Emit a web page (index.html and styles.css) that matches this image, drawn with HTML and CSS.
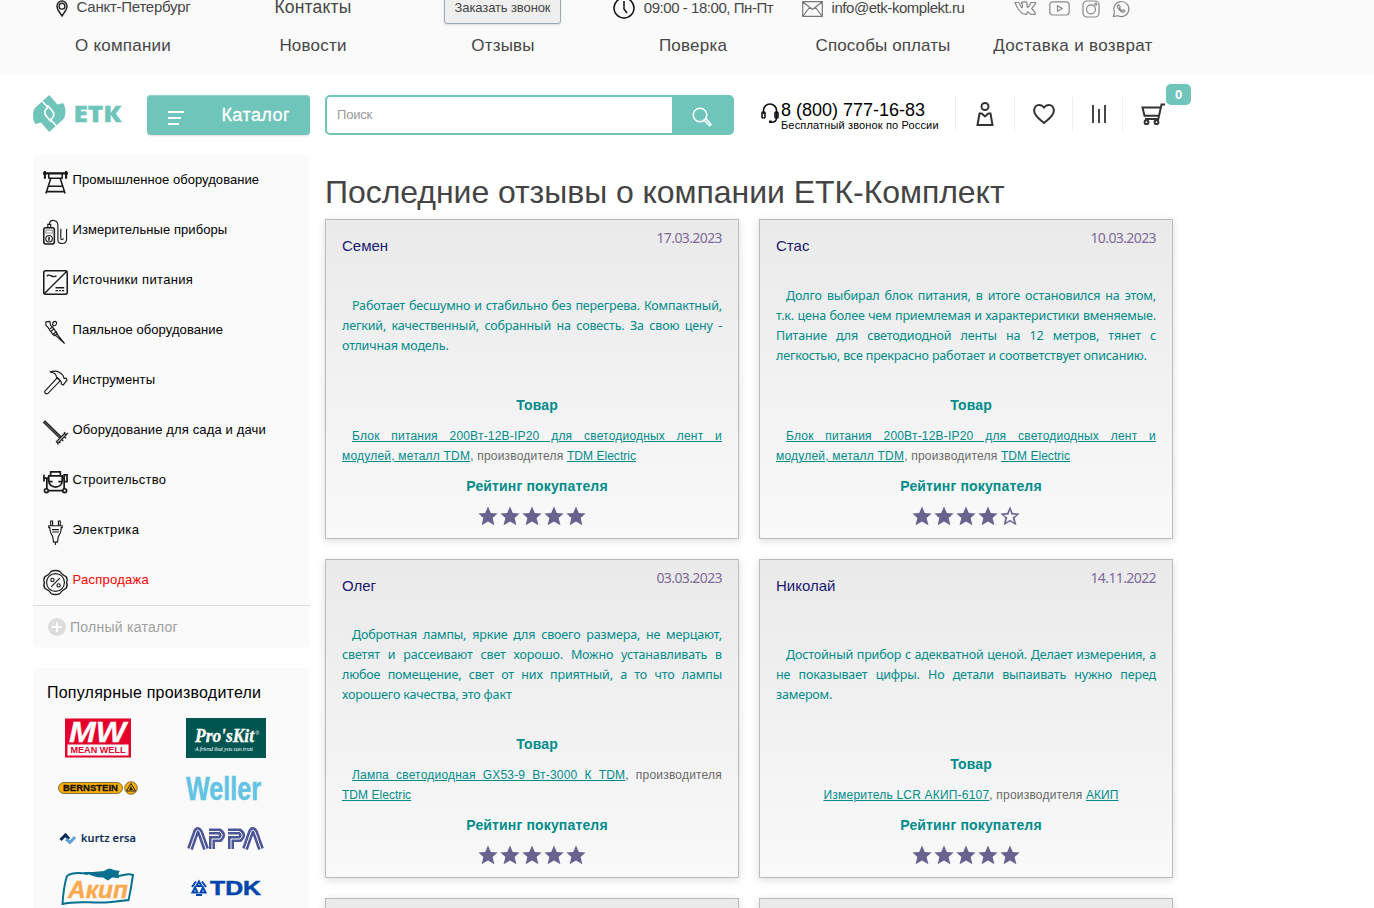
FILE: index.html
```html
<!DOCTYPE html>
<html lang="ru">
<head>
<meta charset="utf-8">
<title>Отзывы — ЕТК-Комплект</title>
<link rel="stylesheet" href="styles.css">
</head>
<body>
<div class="topbar">
  <div class="top-row contacts">
    <div class="cell city"><svg class="pin" viewBox="0 0 12 17"><path d="M6 16C4 12.500 1 10 1 6.200a5 5.200 0 0 1 10 0C11 10 8 12.500 6 16z"/><circle cx="6" cy="6.200" r="2.900"/></svg><span class="t-city">Санкт-Петербург</span></div>
    <div class="cell"><span class="t-cont">Контакты</span></div>
    <div class="cell"><button class="callback">Заказать звонок</button></div>
    <div class="cell hours"><svg class="clock" viewBox="0 0 22 22"><circle cx="11" cy="11" r="10"/><path d="M11 4v8l3 4"/></svg><span class="t-hours">09:00 - 18:00, Пн-Пт</span></div>
    <div class="cell mail"><svg class="env" viewBox="0 0 21 16"><path d="M.7.7h19.600v14.600H.7zM1 1l9.500 7.500L20 1M1 15l6.500-8.500M20 15l-6.500-8.500"/></svg><span class="t-mail">info@etk-komplekt.ru</span></div>
    <div class="cell social">
      <svg class="vk" viewBox="0 0 23 15"><path d="M1 1.500h3.500c1 0 1 2.500 3 5 .8.700 1.200-.5.700-3.500-.1-.8-1-.8-1-1 1-1.500 5.500-1.300 5.800-.3.300 1.500-.3 4 .3 4.600C15 6 16 3.500 17 1.500h4.500c.9.500-1.300 3-3.800 6 .8 1.500 3.300 3 3.800 5.300.1.800-3.300.7-4.500.5-1.500-.8-2.500-2.800-3.300-2.500-.7.500-.2 2-1.200 2.500C7 14 3.500 8 1 1.500z"/></svg>
      <svg class="yt" viewBox="0 0 21 15"><rect x=".8" y=".8" width="19.400" height="13.200" rx="3"/><path d="M8.500 4.800l4.700 2.700-4.700 2.700z"/></svg>
      <svg class="ig" viewBox="0 0 18 18"><rect x="1" y="1" width="16" height="16" rx="4"/><circle cx="9" cy="9.300" r="4.500"/><circle cx="13.800" cy="4.200" r="1"/></svg>
      <svg class="wa" viewBox="0 0 18 18"><path d="M1.500 16.500l1-4.500A7.500 7.500 0 1 1 6 15.700z"/><path d="M6 5c-1 1-.6 3 1.500 5s4.300 3 5.300 1.500c.4-.8-.3-1.200-1.500-1.700l-1 .9C9 10.300 8 9 7.500 8l.7-1C7.700 5.500 7 4.500 6 5z"/></svg>
    </div>
  </div>
  <nav class="top-row menu">
    <a class="cell"><span class="m1">О компании</span></a><a class="cell"><span class="m2">Новости</span></a><a class="cell"><span class="m3">Отзывы</span></a><a class="cell"><span class="m4">Поверка</span></a><a class="cell"><span class="m5">Способы оплаты</span></a><a class="cell"><span class="m6">Доставка и возврат</span></a>
  </nav>
</div>

<header class="header">
  <svg class="logo" viewBox="0 0 90 38"><path fill="#70c5ba" d="M16.200 0L24.500 9.500 30 8C32.500 11 33.500 18 31 23.500L16.200 37 8 27.500 2.500 29C0 26-1 19 1.500 13.500z"/><path stroke="#fff" stroke-width="1.700" d="M9.500 6.500L15 12.300c-3.500 2.500-4.500 6-1.500 9l4.500 5.500M23 30.500l-5.500-5.800c3.500-2.500 4.500-6 1.500-9l-4.500-5.500"/><text x="40.500" y="26.500" fill="#70c5ba" stroke="#70c5ba" stroke-width=".3" font-family="Open Sans" font-weight="800" font-size="22.500" textLength="48" lengthAdjust="spacingAndGlyphs">ЕТК</text></svg>
  <button class="catalog"><svg viewBox="0 0 18 14"><path d="M1 1h16M1 7h13M1 13h11"/></svg><span>Каталог</span></button>
  <div class="search"><span class="ph">Поиск</span><span class="go"><svg viewBox="0 0 20 20"><circle cx="8" cy="8" r="6.800"/><path d="M12 13l2-1.500 5 6-1.300 1.200z"/></svg></span></div>
  <div class="phone"><svg viewBox="0 0 18 21"><path d="M2.500 11V7.500a6.500 6.500 0 0 1 13 0V15c0 2.500-2 4.200-5 4.200"/><rect x="1" y="9" width="3" height="6" rx="1"/><rect x="14" y="9" width="3" height="6" rx="1"/><path d="M8 18.800h3" stroke-width="2.500"/></svg><div><div class="num">8 (800) 777-16-83</div><div class="free">Бесплатный звонок по России</div></div></div>
  <div class="acts">
    <div class="act a1"><svg width="18" height="24" viewBox="0 0 18 24"><circle cx="9" cy="4.500" r="3.500"/><path d="M3.500 11.500h2.200L9 14.500l3.300-3h2.200l2 11.500h-15z"/></svg></div>
    <div class="act a2"><svg width="22" height="20" viewBox="0 0 22 20"><path d="M11 3.500C8-.5 1.200 0 1.200 7c0 5 6 8.500 9.800 12 3.800-3.500 9.800-7 9.800-12 0-7-6.800-7.500-9.800-3.500z"/></svg></div>
    <div class="act a3"><svg width="14" height="18" viewBox="0 0 14 18"><path d="M1 0v18M7 4v14M13 0v18"/></svg></div>
    <div class="act a4"><svg width="24" height="22" viewBox="0 0 24 22"><path d="M24 1.500H20.500l-3.200 14.500H4"/><path d="M19.500 4.500H1.500l2 8.300h14"/><circle cx="5.500" cy="19.200" r="1.900"/><circle cx="15.500" cy="19.200" r="1.900"/></svg><span class="badge">0</span></div>
  </div>
</header>

<div class="page">
<aside class="side">
  <div class="box cats">
    <a><svg viewBox="0 0 26 26"><path stroke-width="2.400" d="M0 3.500h26"/><path stroke-width="1.600" d="M6 8.500h14M6 4v5M20 4v5M8 9L3 24.500M18 9l5 15.500M6 17h14M3 22.500h20"/><path stroke-width="2.200" d="M2 1v8M24 1v8"/></svg><span class="c1">Промышленное оборудование</span></a>
    <a><svg viewBox="0 0 26 26"><rect x=".8" y="8" width="11" height="17" rx="2" stroke-width="1.600"/><path stroke="#999" d="M3 10.500h7v3H3z"/><path d="M5 8V4.500h3V8M6.500 4c1-5 9-5 9 2v15c0 4.500 9 5 9-1V9M18.500 9v10c0 2 2.500 2 2.500 0"/><circle cx="6.300" cy="19.500" r="3.400"/><path d="M6.300 17.500v4" stroke-width="1.600"/></svg><span class="c2">Измерительные приборы</span></a>
    <a><svg viewBox="0 0 26 26"><rect x=".8" y=".8" width="24.400" height="24.400" rx="2" stroke-width="1.600"/><path d="M1 25L25 1M4 6.500c3-4 6 3 10-.5M13 18.500h9M13 21.500h2.500M16.500 21.500h2M19.500 21.500H22" stroke-width="1.400"/></svg><span class="c3">Источники питания</span></a>
    <a><svg viewBox="0 0 26 26"><path d="M3 2l4-.5 1 4 5 6 2 3-3 2-3-3-4-6-2-2zM12 15l10.500 9.500M14 14l8.500 10.500"/><path d="M10 5c0-5 5-4 4-1s-4 2-4 1zM7 9l4-2M8 12l4-3M10 15l4-3"/></svg><span class="c4">Паяльное оборудование</span></a>
    <a><svg viewBox="0 0 26 26"><path d="M2 22L15 8l3 3L5 24.500c-2 1-4-1-3-2.500zM7 2c6-2 11 0 14 4l1 3 2-.5 1 2-4 5-2-1v-2l-2-2-3-3c0-3-3-5-7-5.500z"/></svg><span class="c5">Инструменты</span></a>
    <a><svg viewBox="0 0 26 26"><path stroke-width="3.400" d="M1 1.500L18 18"/><path stroke="#aaa" stroke-width=".8" d="M1.500 2L18 18.500"/><path stroke-width="1.300" d="M14 22.500l8.500-8.500 1.500 1.500-8.500 8.500zM22 14l1-1.500M24 15l2-1.500M22 17.500l2 1.500M19.500 20l1.500 2M17 22.500l1 1.500M15.500 24v1.800"/></svg><span class="c6">Оборудование для сада и дачи</span></a>
    <a><svg viewBox="0 0 26 26"><g stroke-width="1.800"><path d="M8 5.500V2h10v3.500M6 6h14v5c0 9-14 9-14 0zM1 5v7M1 8.500h5M20 8.500h2M22 5h3v7h-3zM4 9v11M22 13v7M5 21.500h16M6 12h4M16 12h4"/><circle cx="3.500" cy="21.500" r="2"/><circle cx="22.500" cy="21.500" r="2"/></g></svg><span class="c7">Строительство</span></a>
    <a><svg viewBox="0 0 26 26"><path d="M8 6V1h2v5M16 6V1h2v5M6 6h14v2h-1c0 5-1 6-3 9l-1 6h-4l-1-6c-2-3-3-4-3-9H6zM9.500 10h7M9.500 12.500h7M13 23v3"/></svg><span class="c8">Электрика</span></a>
    <a class="sale"><svg viewBox="0 0 26 26"><path d="M8.500 1.500Q13-.5 17.500 1.500L20 4.500l4 2.500q2 3 .5 6 1.500 3-.5 6l-4 2.500-2.500 3Q13 26.500 8.500 24.500L6 21.500 2 19q-2-3-.5-6Q0 10 2 7l4-2.500z" stroke-width="1.400"/><circle cx="13" cy="13" r="9.300"/><circle cx="9.800" cy="10.300" r="1.700"/><circle cx="16.200" cy="16" r="1.700"/><path d="M17.500 8.500l-9 9"/></svg><span class="c9">Распродажа</span></a>
    <div class="full"><svg viewBox="0 0 18 18"><circle cx="9" cy="9" r="9"/><path d="M9 4v10M4 9h10"/></svg><span>Полный каталог</span></div>
  </div>
  <div class="box makers">
    <h3>Популярные производители</h3>
    <div class="brands">
      <svg viewBox="0 0 80 40"><path fill="#e4002b" d="M7 .5h66v39H7z"/><path fill="#fff" d="M9.500 26.500h61V37.500h-61z"/><text x="11" y="24" fill="#fff" stroke="#fff" stroke-width=".3" font-family="Liberation Sans" font-weight="700" font-style="italic" font-size="29.500" textLength="57" lengthAdjust="spacingAndGlyphs">MW</text><text x="12.500" y="35.300" fill="#e4002b" font-family="Liberation Sans" font-weight="700" font-size="9.500" textLength="55" lengthAdjust="spacingAndGlyphs">MEAN WELL</text></svg>
      <svg viewBox="0 0 80 40"><path fill="#005550" d="M0 0h80v40H0z"/><text x="9" y="24" fill="#fff" stroke="#fff" stroke-width=".3" font-family="Liberation Serif" font-weight="700" font-style="italic" font-size="18" textLength="59" lengthAdjust="spacingAndGlyphs">Pro'sKit</text><text x="69.500" y="17" fill="#fff" font-size="5" font-family="Liberation Sans">®</text><text x="9" y="32.500" fill="#fff" font-family="Liberation Serif" font-style="italic" font-size="6" textLength="58">A friend that you can trust</text></svg>
      <svg viewBox="0 0 80 40"><rect x=".5" y="14.500" width="64" height="11" rx="5.500" fill="#f9ae00" stroke="#4b4534" stroke-width=".7"/><text x="5" y="23.400" fill="#111" stroke="#111" stroke-width=".3" font-family="Liberation Sans" font-weight="700" font-size="9.500" textLength="55" lengthAdjust="spacingAndGlyphs">BERNSTEIN</text><circle cx="73" cy="20" r="6.300" fill="#f9ae00" stroke="#4b4534" stroke-width=".7"/><path d="M73 15.500l4.600 7.500h-9.200z" fill="none" stroke="#222"/><path d="M73 18l2 4h-4z" fill="#222"/></svg>
      <svg viewBox="0 0 80 40"><text x="0" y="32" fill="#62c3e3" stroke="#62c3e3" stroke-width=".5" font-family="Liberation Sans" font-weight="700" font-size="33" textLength="75" lengthAdjust="spacingAndGlyphs">Weller</text></svg>
      <svg viewBox="0 0 80 40"><path d="M2.500 22l5-5 3.500 4" fill="none" stroke="#0d2c54" stroke-width="3"/><path d="M8 21l4 3.500L17 19" fill="none" stroke="#64a0d8" stroke-width="3"/><text x="23" y="23.500" fill="#0d2c54" stroke="#0d2c54" stroke-width=".2" font-family="Open Sans" font-weight="600" font-size="11" textLength="55">kurtz ersa</text></svg>
      <svg viewBox="0 0 80 40"><g fill="none" stroke="#4c5696" stroke-width="6"><path d="M4 31l6-17q1.500-4 4 0l6 17M26 31V21H34q4.500-4-.5-7.500H23M45 31V21h9q4.500-4-.5-7.500H42M59 31l6-17q1.500-4 4 0l6 17"/></g><g fill="none" stroke="#fafafa" stroke-width="1"><path d="M4 31l6-17q1.500-4 4 0l6 17M26 31V21H34q4.500-4-.5-7.500H23M45 31V21h9q4.500-4-.5-7.500H42M59 31l6-17q1.500-4 4 0l6 17"/></g></svg>
      <svg viewBox="0 0 80 40"><path d="M30 6C20 4 13 5 9 8 6 17 5 28 4.500 36c15-4 31 0 49-2l17-2c2-8 3-16 4.500-25-5-2-8 0-14 1" fill="none" stroke="#08708f" stroke-width="2"/><path d="M25 4c8 0 13 0 21-1 5-3 6-2.500 10-1l6 1c-3 3 0 5-1 7l-7-.5-4 3-5-3c-7 0-13-2-20-5.500z" fill="#08708f"/><text x="10" y="29.500" fill="#faa94e" stroke="#faa94e" stroke-width=".4" font-family="Liberation Sans" font-weight="700" font-style="italic" font-size="24" textLength="60" lengthAdjust="spacingAndGlyphs">Акип</text></svg>
      <svg viewBox="0 0 80 40"><g fill="none" stroke="#0046ad" stroke-width="2"><path d="M13 13.500l2.500 4.500h-5zM9 19.500l-2.500 5h5zM17 19.500l-2.500 5h5zM10 13.500L6 19M16 13.500l4 5.500M10 27h6"/></g><text x="24" y="27" fill="#0046ad" stroke="#0046ad" stroke-width=".5" font-family="Liberation Sans" font-weight="700" font-size="20.500" textLength="51" lengthAdjust="spacingAndGlyphs">TDK</text></svg>
    </div>
  </div>
</aside>

<main class="main">
  <h1>Последние отзывы о компании ЕТК-Комплект</h1>
  <div class="grid">
    <article class="card">
      <div class="head"><span class="name">Семен</span><span class="date">17.03.2023</span></div>
      <div class="text"><p>Работает бесшумно и стабильно без перегрева. Компактный, легкий, качественный, собранный на совесть. За свою цену - отличная модель.</p></div>
      <h4>Товар</h4>
      <p class="prod"><a>Блок питания 200Вт-12В-IP20 для светодиодных лент и модулей, металл TDM</a>, производителя <a class="brand">TDM Electric</a></p>
      <h4>Рейтинг покупателя</h4>
      <div class="stars"><i></i><i></i><i></i><i></i><i></i></div>
    </article>
    <article class="card">
      <div class="head"><span class="name">Стас</span><span class="date">10.03.2023</span></div>
      <div class="text"><p>Долго выбирал блок питания, в итоге остановился на этом, т.к. цена более чем приемлемая и характеристики вменяемые. Питание для светодиодной ленты на 12 метров, тянет с легкостью, все прекрасно работает и соответствует описанию.</p></div>
      <h4>Товар</h4>
      <p class="prod"><a>Блок питания 200Вт-12В-IP20 для светодиодных лент и модулей, металл TDM</a>, производителя <a class="brand">TDM Electric</a></p>
      <h4>Рейтинг покупателя</h4>
      <div class="stars"><i></i><i></i><i></i><i></i><i class="off"></i></div>
    </article>
    <article class="card">
      <div class="head"><span class="name">Олег</span><span class="date">03.03.2023</span></div>
      <div class="text"><p>Добротная лампы, яркие для своего размера, не мерцают, светят и рассеивают свет хорошо. Можно устанавливать в любое помещение, свет от них приятный, а то что лампы хорошего качества, это факт</p></div>
      <h4>Товар</h4>
      <p class="prod"><a>Лампа светодиодная GX53-9 Вт-3000 К TDM</a>, производителя <a class="brand">TDM Electric</a></p>
      <h4>Рейтинг покупателя</h4>
      <div class="stars"><i></i><i></i><i></i><i></i><i></i></div>
    </article>
    <article class="card">
      <div class="head"><span class="name">Николай</span><span class="date">14.11.2022</span></div>
      <div class="text"><p>Достойный прибор с адекватной ценой. Делает измерения, а не показывает цифры. Но детали выпаивать нужно перед замером.</p></div>
      <h4>Товар</h4>
      <p class="prod short"><a>Измеритель LCR АКИП-6107</a>, производителя <a class="brand">АКИП</a></p>
      <h4>Рейтинг покупателя</h4>
      <div class="stars"><i></i><i></i><i></i><i></i><i></i></div>
    </article>
    <article class="card"></article>
    <article class="card"></article>
  </div>
</main>
</div>
</body>
</html>
```
FILE: styles.css
```css
* { box-sizing: border-box; }
html, body { height: 908px; overflow: hidden; }
body { margin: 0; background: #fff; color: #464646; font-family: "Liberation Sans", Arial, sans-serif; }
svg { display: block; flex: none; fill: none; overflow: visible; }
a { color: inherit; }
h1, h3, h4, p { margin: 0; }

.topbar { height: 75px; background: #fafafa; padding-left: 28px; overflow: hidden; }
.top-row { display: grid; grid-template-columns: repeat(6, 190px); }
.cell { display: flex; align-items: center; justify-content: center; white-space: nowrap; }
.contacts { height: 34px; margin-top: -10px; font-size: 17px; }
.menu { height: 42px; padding-top: 2px; font-size: 17px; letter-spacing: .2px; }
.m5 { letter-spacing: .1px; }
.m6 { letter-spacing: .35px; }
.t-cont { font-size: 17.500px; letter-spacing: .2px; padding-top: 1px; }
.t-city { font-size: 15px; letter-spacing: -.25px; }
.t-hours { font-size: 15px; letter-spacing: -.45px; padding-top: 1px; }
.t-mail { font-size: 15px; letter-spacing: -.45px; padding-top: 1px; }
.city, .hours, .mail { gap: 9px; }
.city { padding-bottom: 2px; }
.pin { width: 12px; height: 17px; stroke: #222; stroke-width: 1.400; margin-top: 5px; }
.clock { width: 22px; height: 22px; stroke: #111; stroke-width: 1.500; margin-top: 2px; }
.env { width: 21px; height: 16px; stroke: #777; stroke-width: 1.200; margin-top: 3px; }
.callback { height: 32px; width: 117px; margin: 1px 1px 0 0; padding: 0; font: 13px "Liberation Sans", sans-serif; letter-spacing: -.1px; color: #464646; background: #efefef; border: 1px solid #9aa9b4; border-radius: 3px; box-shadow: 0 1px 2px #ddd; }
.social { gap: 12px; padding: 3px 2px 0 0; }
.social svg { stroke: #888; stroke-width: 1.200; }
.vk { width: 23px; height: 15px; } .yt { width: 21px; height: 15px; }
.ig, .wa { width: 18px; height: 18px; }

.header { height: 80px; padding: 20px 0 0 33px; display: flex; align-items: flex-start; }
.logo { width: 90px; height: 38px; margin-right: 24px; }
.catalog { width: 163px; height: 40px; margin-right: 15px; padding: 1px 20px 0 20px; display: flex; align-items: center; justify-content: space-between; border: 0; border-radius: 4px; background: #70c5ba; color: #fff; font: 18px "Liberation Sans", sans-serif; letter-spacing: .45px; box-shadow: inset 0 1px 0 #8fd2c9, 0 1px 2px #ddd; -webkit-text-stroke: .3px #fff; }
.catalog svg { width: 18px; height: 14px; stroke: #fff; stroke-width: 1.800; margin-top: 4px; }
.search { width: 409px; height: 40px; display: flex; justify-content: space-between; border: 2px solid #70c5ba; border-radius: 5px; font-size: 13px; line-height: 36px; letter-spacing: -.2px; color: #999; }
.ph { padding-left: 10px; }
.go { width: 60px; background: #70c5ba; display: flex; align-items: center; justify-content: center; padding-top: 4px; }
.go svg { width: 20px; height: 20px; stroke: #fff; stroke-width: 1.500; }
.phone { width: 194px; margin-left: 27px; padding-top: 6px; display: flex; gap: 2px; color: #000; white-space: nowrap; }
.phone svg { width: 18px; height: 21px; stroke: #111; stroke-width: 1.600; margin-top: 2px; }
.num { font-size: 18px; line-height: 18px; }
.free { font-size: 11px; line-height: 13px; letter-spacing: .15px; }
.acts { display: flex; padding-top: 2px; }
.act { height: 34px; border-left: 1px solid #eee; display: flex; align-items: center; justify-content: center; position: relative; }
.act svg { stroke: #333; stroke-width: 2; }
.a1 { width: 59px; } .a2 { width: 58px; } .a3 { width: 50px; } .a4 { width: 60px; }
.a3 svg { margin-left: 2px; stroke-width: 1.800; }
.badge { position: absolute; right: -9px; top: -13px; width: 25px; height: 21px; border-radius: 5px; background: #70c5ba; color: #fff; font-weight: 700; font-size: 13px; line-height: 21px; text-align: center; }

.page { display: flex; gap: 15px; padding-left: 33px; align-items: flex-start; }
.side { width: 277px; display: flex; flex-direction: column; gap: 20px; }
.box { background: #fafafa; border-radius: 5px; }
.cats { height: 493px; }
.cats a { height: 50px; display: flex; padding: 14px 0 0 10px; gap: 4px; color: #000; font-size: 13px; line-height: 22px; white-space: nowrap; }
.cats a svg { width: 25px; height: 25px; margin-top: 1px; stroke: #1a1a1a; stroke-width: 1.200; }
.cats a span { padding-left: .5px; }
.c1 { letter-spacing: .05px; } .c2, .c4 { letter-spacing: .08px; } .c3 { letter-spacing: .32px; }
.c5 { letter-spacing: .15px; } .c6 { letter-spacing: .14px; } .c7 { letter-spacing: .25px; }
.c8 { letter-spacing: .4px; } .c9 { letter-spacing: .25px; }
.cats a.sale { color: #f00; }
.full { height: 43px; border-top: 1px solid #ddd; display: flex; align-items: center; gap: 4px; padding-left: 15px; font-size: 14px; letter-spacing: .25px; color: #a0a0a0; }
.full svg { width: 18px; height: 18px; }
.full circle { fill: #ddd; } .full path { stroke: #fff; stroke-width: 1.800; }
.makers { height: 300px; padding: 15px 14px; }
.makers h3 { font-size: 16px; font-weight: 400; line-height: 20px; letter-spacing: .22px; color: #000; white-space: nowrap; }
.brands { margin-top: 15px; padding-left: 11px; display: grid; grid-template-columns: 128px 80px; row-gap: 10px; }
.brands svg { width: 80px; height: 40px; }

.main { width: 848px; }
h1 { height: 64px; padding-top: 19px; font-size: 32px; line-height: 36px; letter-spacing: -.05px; font-weight: 400; color: #444; white-space: nowrap; }
.grid { display: grid; grid-template-columns: 414px 414px; grid-template-rows: 320px 319px 320px; gap: 20px; }
.card { border: 1px solid #bbb; padding: 0 16px 12px; background: linear-gradient(#eaeaea, #f9f9f9); box-shadow: 0 2px 8px rgba(0,0,0,.14); display: flex; flex-direction: column; }
.head { height: 45px; display: flex; justify-content: space-between; line-height: 20px; }
.name { padding-top: 16px; font-size: 15px; color: #191970; }
.date { padding-top: 8px; font: 14px/20px "Noto Sans", sans-serif; letter-spacing: -.6px; color: #7d6b9b; }
.text { flex: 1; display: flex; align-items: center; padding-bottom: 9px; }
.text p { width: 380px; font: 12.500px/20px "Noto Sans", sans-serif; letter-spacing: -.16px; text-indent: 10px; text-align: justify; color: #008b8b; }
h4 { padding-left: 10px; text-align: center; font-size: 14px; line-height: 20px; letter-spacing: .15px; color: #008b8b; }
.prod { margin: 11px 0 10px; width: 380px; font-size: 12px; line-height: 20px; letter-spacing: .2px; text-indent: 10px; text-align: justify; color: #696969; }
.prod a { color: #008b8b; text-decoration: underline; }
.prod .brand { letter-spacing: .04px; white-space: nowrap; }
.prod.short { text-align: center; }
.stars { margin-top: 10px; height: 20px; display: flex; justify-content: center; gap: 2px; align-items: center; }
.stars i { width: 20px; height: 20px; background: #66638f; clip-path: polygon(50% 2%, 64% 35%, 98% 38%, 73% 60%, 82% 96%, 50% 77%, 18% 96%, 27% 60%, 2% 38%, 36% 35%); }
.stars .off { clip-path: polygon(evenodd, 50% 2%, 64% 35%, 98% 38%, 73% 60%, 82% 96%, 50% 77%, 18% 96%, 27% 60%, 2% 38%, 36% 35%, 50% 2%, 50% 20%, 57% 43%, 82% 45%, 63% 58%, 70% 83%, 50% 69%, 30% 83%, 37% 58%, 18% 45%, 43% 43%, 50% 20%); }
```
